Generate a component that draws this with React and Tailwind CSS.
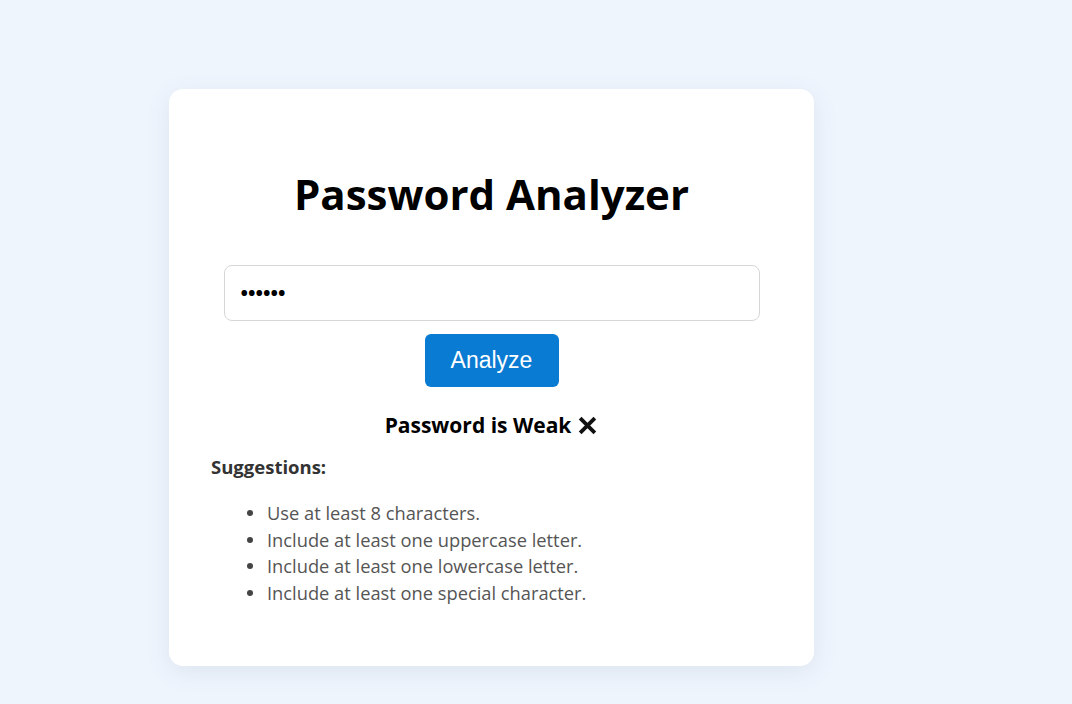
export default function App() {
  const font = { fontFamily: '"Open Sans", "Noto Sans", sans-serif' };
  const items = [
    "Use at least 8 characters.",
    "Include at least one uppercase letter.",
    "Include at least one lowercase letter.",
    "Include at least one special character.",
  ];
  return (
    <div className="min-h-[704px] w-full bg-[#eff5fd] pt-[89px] pl-[169px]" style={font}>
      <div className="w-[645px] h-[577px] bg-white rounded-[14px] shadow-[0_6px_24px_rgba(60,90,130,0.10)] flex flex-col pt-[75px]">
        <h1 className="text-center text-[42px] leading-[60px] font-bold text-black">Password Analyzer</h1>
        <div className="mt-[41px] flex justify-center">
          <div className="w-[536px] h-[56px] rounded-[8px] border border-[#d6d6d6] flex items-center px-[16px]">
            <span className="text-[20px] text-black font-bold leading-none">••••••</span>
          </div>
        </div>
        <div className="mt-[13px] flex justify-center">
          <button className="w-[134px] h-[53px] rounded-[6px] bg-[#0a7bd3] text-white text-[23px]" style={{ fontFamily: '"Liberation Sans", Arial, sans-serif' }}>
            Analyze
          </button>
        </div>
        <div className="mt-[23px] flex justify-center items-center gap-[6px]">
          <span className="text-[21px] font-bold text-black leading-[30px]">Password is Weak</span>
          <svg width="21" height="21" viewBox="0 0 20 20" className="mt-[1px]">
            <path d="M3 3 L17 17 M17 3 L3 17" stroke="#111" strokeWidth="3.6" strokeLinecap="butt" />
          </svg>
        </div>
        <div className="mt-[15px] pl-[42px] text-[18.5px] font-bold text-[#333] leading-[24px]">Suggestions:</div>
        <ul className="mt-[21px] pl-[78px] text-[18.3px] text-[#555] leading-[26.6px]">
          {items.map((t) => (
            <li key={t} className="flex items-center">
              <span className="w-[20px] flex-none">
                <span className="block w-[6px] h-[6px] rounded-full bg-[#444]" />
              </span>
              {t}
            </li>
          ))}
        </ul>
      </div>
    </div>
  );
}
